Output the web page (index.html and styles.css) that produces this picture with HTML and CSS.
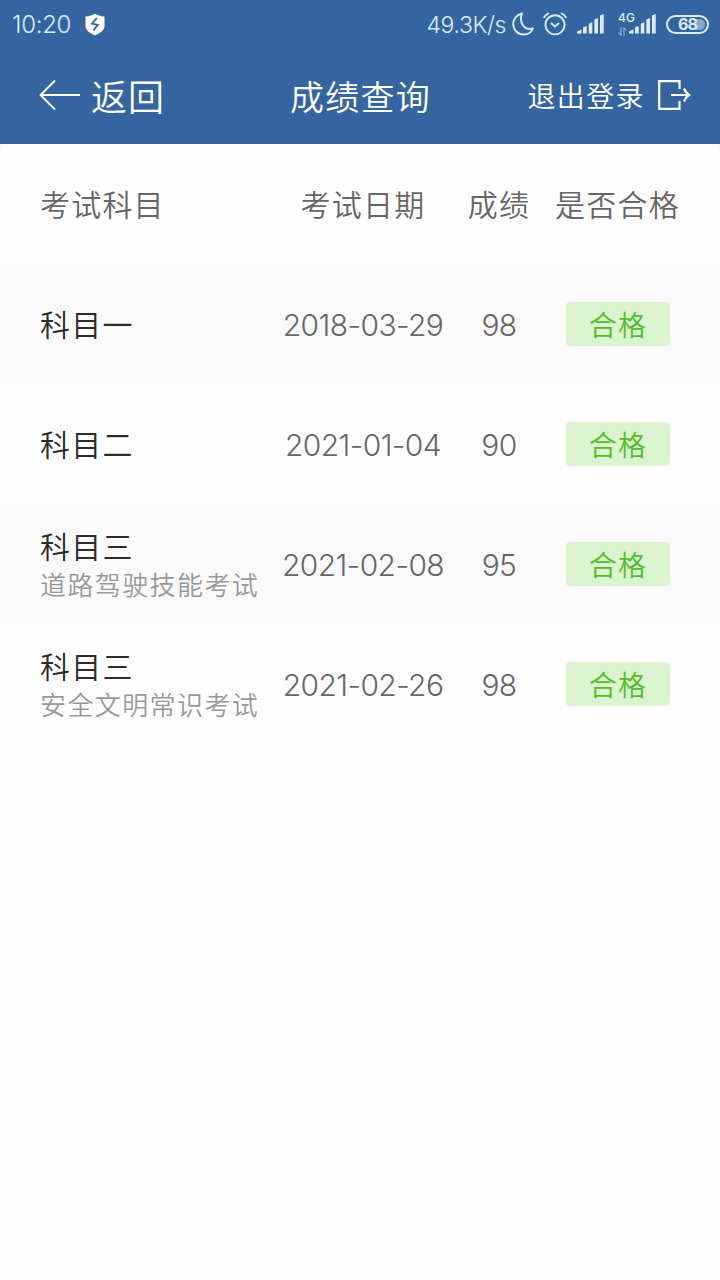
FILE: index.html
```html
<!DOCTYPE html>
<html lang="zh-CN">
<head>
    <meta charset="UTF-8">
    <meta name="viewport" content="width=device-width, initial-scale=1.0">
    <title>成绩查询</title>
    <link rel="stylesheet" href="styles.css">
</head>
<body>
    <div class="top">
        <div class="status-bar">
            <span class="time">10:20</span>
            <svg class="shield" width="20" height="23" viewBox="0 0 20 23">
                <path d="M10 0.500C12 2.400 16 3.200 19.500 3.500V13C19.500 18 13.500 20.600 10 22.500C6.500 20.600 0.500 18 0.500 13V3.500C4 3.200 8 2.400 10 0.500Z" fill="#fff"/>
                <path d="M11.800 5L7 10.600L12.800 11.800L8.300 17.500" fill="none" stroke="#3565a0" stroke-width="1.900"/>
            </svg>
            <span class="speed">49.3K/s</span>
            <svg class="moon" width="22" height="24" viewBox="0 0 22 24">
                <path d="M10 1.500C5 2.500 1.200 6.500 1.200 12C1.200 18 6 22.500 11.500 22.500C16 22.500 19.500 20 20.800 16.500C12.500 18.500 6.500 11 10 1.500Z" fill="none" stroke="#dcebfb" stroke-width="1.900" stroke-linejoin="round"/>
            </svg>
            <svg class="alarm" width="24" height="24" viewBox="0 0 24 24" fill="none" stroke="#dcebfb" stroke-width="1.900" stroke-linecap="round">
                <circle cx="12" cy="12.800" r="9.600"/>
                <path d="M1.200 5.300Q2.600 2.900 5.200 1.500M22.800 5.300Q21.400 2.900 18.800 1.500M8.500 11.500L12 14.500L15.500 11.500"/>
            </svg>
            <svg class="signal" width="27" height="20" viewBox="0 0 27 20" fill="#dcebfb">
                <path d="M0 19.500V17.500L4.500 15.500V19.500ZM6 19.500V13.500L9.700 12V19.500ZM11.800 19.500V9.800L15.300 8.300V19.500ZM17.400 19.500V5.500L21 4V19.500ZM23 19.500V1.500L26.700 0V19.500Z"/>
            </svg>
            <div class="network">
                <span class="network-type">4G</span>
                <svg width="9" height="9" viewBox="0 0 9 9" fill="none" stroke="#86a7cf" stroke-width="1.300">
                    <path d="M3 0V8L0.500 5.500M6 9V1L8.500 3.500"/>
                </svg>
            </div>
            <svg class="signal-second" width="27" height="20" viewBox="0 0 27 20" fill="#dcebfb">
                <path d="M0 19.500V17.500L4.500 15.500V19.500ZM6 19.500V13.500L9.700 12V19.500ZM11.800 19.500V9.800L15.300 8.300V19.500ZM17.400 19.500V5.500L21 4V19.500ZM23 19.500V1.500L26.700 0V19.500Z"/>
            </svg>
            <div class="battery"><span>68</span></div>
        </div>
        <div class="nav">
            <div class="back">
                <svg width="42" height="32" viewBox="0 0 42 32" fill="none" stroke="#fff" stroke-width="1.800">
                    <path d="M16 1.500L1.500 16L16 30.500M1.500 16H41"/>
                </svg>
                <span>返回</span>
            </div>
            <h1>成绩查询</h1>
            <div class="logout">
                <span>退出登录</span>
                <svg width="34" height="32" viewBox="0 0 34 32" fill="none" stroke="#fff" stroke-width="2.200">
                    <path d="M22.500 10V2.200H2.200V29.800H22.500V22M14 16H32M27 9.500Q28.500 13.500 32 16Q28.500 18.500 27 22.500"/>
                </svg>
            </div>
        </div>
    </div>

    <div class="content">
        <table>
            <thead>
                <tr>
                    <th class="subject">考试科目</th>
                    <th class="date">考试日期</th>
                    <th class="score">成绩</th>
                    <th class="pass">是否合格</th>
                    <th></th>
                </tr>
            </thead>
            <tbody>
                <tr>
                    <td class="subject">科目一</td>
                    <td class="number">2018-03-29</td>
                    <td class="number">98</td>
                    <td><span class="badge">合格</span></td>
                    <td></td>
                </tr>
                <tr>
                    <td class="subject">科目二</td>
                    <td class="number">2021-01-04</td>
                    <td class="number">90</td>
                    <td><span class="badge">合格</span></td>
                    <td></td>
                </tr>
                <tr>
                    <td class="subject">科目三<small>道路驾驶技能考试</small></td>
                    <td class="number">2021-02-08</td>
                    <td class="number">95</td>
                    <td><span class="badge">合格</span></td>
                    <td></td>
                </tr>
                <tr>
                    <td class="subject">科目三<small>安全文明常识考试</small></td>
                    <td class="number">2021-02-26</td>
                    <td class="number">98</td>
                    <td><span class="badge">合格</span></td>
                    <td></td>
                </tr>
            </tbody>
        </table>
    </div>
</body>
</html>
```
FILE: styles.css
```css
* {
    box-sizing: border-box;
}
body {
    margin: 0;
    background-color: #f7f7f7;
    font-family: 'Noto Sans CJK SC', sans-serif;
    font-weight: 350;
    color: #666;
}
.top {
    height: 144px;
    background-color: #3565a0;
    color: #fff;
}
.status-bar {
    display: flex;
    align-items: center;
    height: 48px;
    padding: 0 11px 0 12px;
    font-family: Inter, sans-serif;
    color: #dcebfb;
}
.status-bar svg {
    flex: none;
}
.time {
    width: 73px;
    font-size: 24px;
    line-height: 50px;
    padding-top: 2px;
    letter-spacing: -0.3px;
}
.speed {
    margin-left: auto;
    padding-top: 2px;
    font-size: 23px;
    letter-spacing: -0.4px;
    white-space: nowrap;
}
.moon {
    margin-left: 6px;
}
.alarm {
    margin-left: 9px;
}
.signal {
    margin-left: 10px;
}
.network {
    display: flex;
    flex-direction: column;
    width: 17px;
    height: 24px;
    margin-left: 14px;
    margin-right: -16px;
}
.network-type {
    font-size: 12px;
    font-weight: 500;
    line-height: 12px;
}
.network svg {
    margin-top: 3px;
}
.signal-second {
    margin-left: 10px;
}
.battery {
    display: flex;
    align-items: center;
    justify-content: center;
    width: 43px;
    height: 19px;
    margin-left: 10px;
    border: 2px solid #dcebfb;
    border-radius: 10px;
    background: linear-gradient(to right, transparent 26px, #86a7cf 26px) content-box;
    padding: 2px;
    font-size: 16px;
    font-weight: 700;
    letter-spacing: -1px;
}
.nav {
    display: grid;
    grid-template-columns: 1fr auto 1fr;
    align-items: center;
    height: 96px;
    padding: 0 29px 2px 39px;
}
.back, .logout {
    display: flex;
    align-items: center;
}
.back {
    gap: 10px;
    font-size: 36px;
    letter-spacing: 1px;
}
.nav h1 {
    margin: 0 9px 0 0;
    font-size: 34px;
    font-weight: 350;
    letter-spacing: 1.3px;
}
.logout {
    justify-content: flex-end;
    gap: 12px;
    font-size: 28px;
    letter-spacing: 1.4px;
}
.content {
    min-height: 1136px;
    background-color: #fefefe;
    border-radius: 10px 10px 0 0;
}
table {
    width: 100%;
    table-layout: fixed;
    border-collapse: collapse;
}
tr {
    height: 120px;
}
tbody tr:nth-child(odd) {
    background-color: #fafafa;
}
th, td {
    padding: 0 0 2px;
    font-size: 30px;
    font-weight: 350;
    line-height: 40px;
    letter-spacing: 1.2px;
    text-align: center;
    white-space: nowrap;
}
.subject {
    width: 270px;
    padding-left: 40px;
    text-align: left;
}
td.subject {
    color: #2b2b2b;
}
.date {
    width: 186px;
}
.score {
    width: 86px;
}
.pass {
    width: 151px;
}
small {
    display: block;
    padding-top: 1px;
    font-size: 26px;
    line-height: 36px;
    letter-spacing: 1.4px;
    color: #999;
}
.number {
    padding: 2px 0 0;
    font-family: Inter, sans-serif;
    letter-spacing: -0.6px;
}
.badge {
    display: block;
    width: 104px;
    height: 44px;
    margin: 2px auto 0;
    border-radius: 4px;
    background-color: #dcf3d0;
    font-size: 28px;
    line-height: 44px;
    letter-spacing: 1.3px;
    text-indent: 1px;
    color: #53bd2b;
}
```
